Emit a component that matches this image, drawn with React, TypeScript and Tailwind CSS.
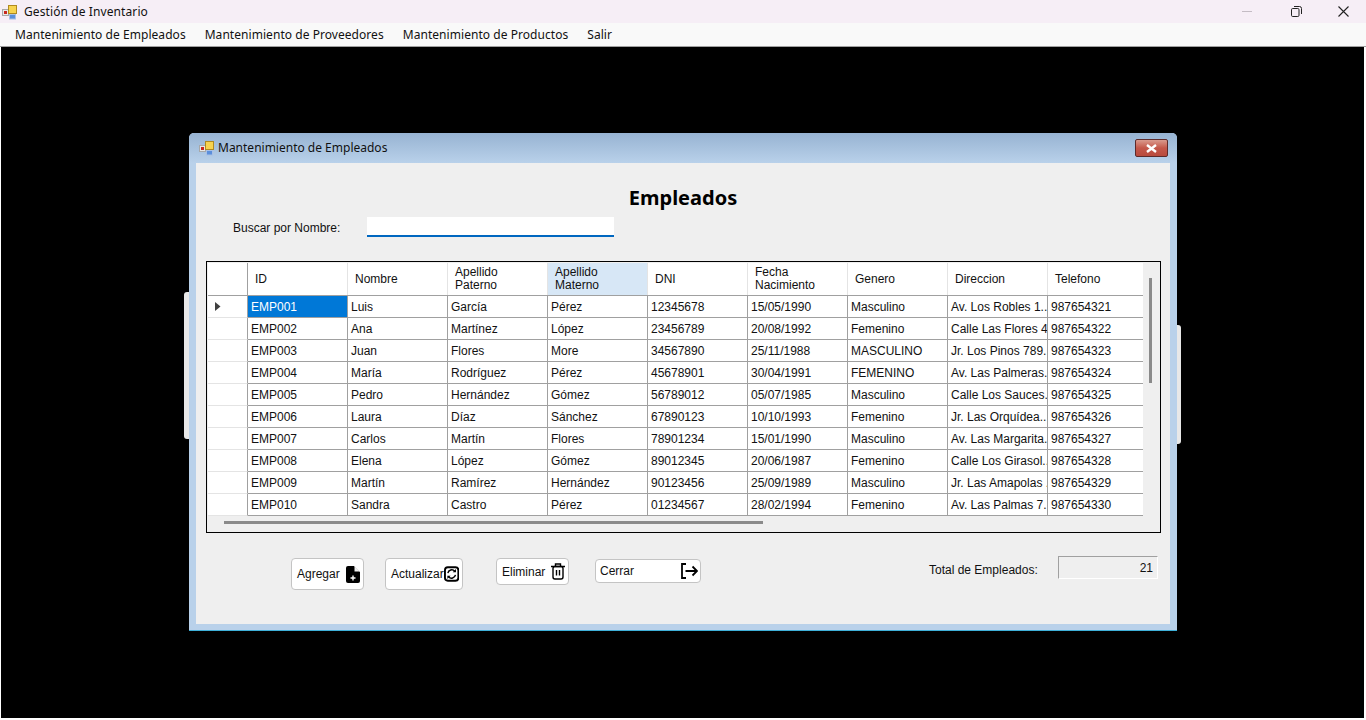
import React from "react";

const columnas = ["ID", "Nombre", "Apellido Paterno", "Apellido Materno", "DNI", "Fecha Nacimiento", "Genero", "Direccion", "Telefono"];

const empleados = [
  ["EMP001", "Luis", "García", "Pérez", "12345678", "15/05/1990", "Masculino", "Av. Los Robles 1...", "987654321"],
  ["EMP002", "Ana", "Martínez", "López", "23456789", "20/08/1992", "Femenino", "Calle Las Flores 4...", "987654322"],
  ["EMP003", "Juan", "Flores", "More", "34567890", "25/11/1988", "MASCULINO", "Jr. Los Pinos 789...", "987654323"],
  ["EMP004", "María", "Rodríguez", "Pérez", "45678901", "30/04/1991", "FEMENINO", "Av. Las Palmeras...", "987654324"],
  ["EMP005", "Pedro", "Hernández", "Gómez", "56789012", "05/07/1985", "Masculino", "Calle Los Sauces...", "987654325"],
  ["EMP006", "Laura", "Díaz", "Sánchez", "67890123", "10/10/1993", "Femenino", "Jr. Las Orquídea...", "987654326"],
  ["EMP007", "Carlos", "Martín", "Flores", "78901234", "15/01/1990", "Masculino", "Av. Las Margarita...", "987654327"],
  ["EMP008", "Elena", "López", "Gómez", "89012345", "20/06/1987", "Femenino", "Calle Los Girasol...", "987654328"],
  ["EMP009", "Martín", "Ramírez", "Hernández", "90123456", "25/09/1989", "Masculino", "Jr. Las Amapolas ...", "987654329"],
  ["EMP010", "Sandra", "Castro", "Pérez", "01234567", "28/02/1994", "Femenino", "Av. Las Palmas 7...", "987654330"],
];

function AppIcon() {
  return (
    <svg width="16" height="16" viewBox="0 0 16 16" className="shrink-0">
      <rect x="0.5" y="5.5" width="6" height="6" fill="#e8e8e8" stroke="#a8a8a8" />
      <rect x="2" y="7" width="3" height="3" fill="#c8281e" />
      <rect x="6.5" y="1.5" width="8" height="8" fill="#f7d34f" stroke="#b08a20" />
      <rect x="7.5" y="10.5" width="6" height="4.5" fill="#5b8fdc" stroke="#a9c0e4" />
    </svg>
  );
}

function App() {
  return (
    <div className="w-[1366px] h-[720px] overflow-hidden bg-white font-['Liberation_Sans',sans-serif] text-black">
      <div className="h-[23px] bg-[#f6eef6] flex items-center pl-[2px] pr-[17px]">
        <AppIcon />
        <span className="ml-[6px] text-[12px] tracking-[0.1px] font-['Noto_Sans',sans-serif] text-[#111]">Gestión de Inventario</span>
        <div className="ml-auto flex items-center">
          <div className="w-[10px] h-[1px] bg-[#c4bcc4]" />
          <svg width="11" height="11" viewBox="0 0 11 11" className="ml-[39px]" fill="none" stroke="#222">
            <rect x="0.5" y="2.5" width="7.5" height="8" rx="1.2" />
            <path d="M3 .5h5.5a2 2 0 0 1 2 2V8" />
          </svg>
          <svg width="11" height="11" viewBox="0 0 11 11" className="ml-[36px]" fill="none" stroke="#222" strokeWidth="1.1">
            <path d="M.5.5l10 10M10.500.5l-10 10" />
          </svg>
        </div>
      </div>

      <div className="h-[24px] bg-[#f9f9f9] flex items-center pl-[15px] gap-[19px] text-[12px] tracking-[0.05px] font-['Noto_Sans',sans-serif] text-[#111] border-b border-[#a0a0a0]">
        <span>Mantenimiento de Empleados</span>
        <span>Mantenimiento de Proveedores</span>
        <span>Mantenimiento de Productos</span>
        <span>Salir</span>
      </div>

      <div className="relative h-[671px] bg-black ml-[1px] mr-[2px] pl-[188px] pt-[86px]">
        <div className="absolute left-[183px] top-[245px] w-[5px] h-[147px] bg-[#e8e8e8] rounded-l-[3px]" />
        <div className="absolute left-[1176px] top-[278px] w-[4px] h-[119px] bg-[#e8e8e8] rounded-r-[3px]" />

        <div className="relative w-[988px] h-[498px] rounded-t-[5px] bg-[#b9d1ea] flex flex-col px-[7px] pb-[6px] border-b border-[#3fb0d8]">
          <div className="h-[30px] -mx-[7px] px-[10px] rounded-t-[5px] bg-gradient-to-b from-[#97b3d2] to-[#b9d1ea] flex items-center shrink-0">
            <AppIcon />
            <span className="ml-[3px] text-[12px] font-['Noto_Sans',sans-serif] text-[#111]">Mantenimiento de Empleados</span>
            <div className="ml-auto mr-[-1px] w-[33px] h-[18px] rounded-[2px] border border-[#5d2a2a] bg-gradient-to-b from-[#d99a8e] via-[#c4574a] to-[#b84a3d] flex items-center justify-center">
              <svg width="13" height="9" viewBox="0 0 13 9" fill="none" stroke="#fff" strokeWidth="2.4">
                <path d="M2 1l9 7M11 1l-9 7" />
              </svg>
            </div>
          </div>

          <div className="flex-1 bg-[#efefef] flex flex-col">
            <h1 className="h-[24px] mt-[23px] text-center text-[20px] leading-[24px] font-bold font-['Noto_Sans',sans-serif] pl-[-2px]">Empleados</h1>

            <div className="flex items-start mt-[4px] h-[24px] pl-[37px]">
              <span className="w-[134px] text-[12px] leading-[16px] mt-[6px] text-[#111]">Buscar por Nombre:</span>
              <div className="w-[247px] h-[20px] mt-[3px] bg-white border-b-2 border-[#0067c0]" />
            </div>

            <div className="relative mt-[23px] ml-[10px] w-[955px] h-[272px] border border-black bg-[#efefef] pl-[1px] pt-[1px]">
              <div className="w-[935px] h-[253px] overflow-hidden bg-white text-[12px] leading-[16px] text-[#111]">
                <div className="flex h-[33px] border-b border-[#a0a0a0]">
                  <div className="w-[40px] shrink-0 border-r border-[#a0a0a0]" />
                  {columnas.map((col, i) => (
                    <div
                      key={col}
                      className={`w-[100px] shrink-0 flex items-center pl-[7px] pr-[30px] leading-[13px] border-r border-[#e4e4e4] ${i === 3 ? "bg-[#d7e7f6]" : ""}`}
                    >
                      {col}
                    </div>
                  ))}
                </div>
                {empleados.map((fila, r) => (
                  <div key={fila[0]} className="flex h-[22px] border-b border-[#a0a0a0]">
                    <div className="w-[40px] shrink-0 border-r border-[#a0a0a0] flex items-center pl-[7px] -mb-px border-b border-b-[#e4e4e4]">
                      {r === 0 && (
                        <svg width="6" height="9" viewBox="0 0 6 9">
                          <path d="M0 0l5.500 4.500L0 9z" fill="#404040" />
                        </svg>
                      )}
                    </div>
                    {fila.map((valor, c) => (
                      <div
                        key={c}
                        className={`w-[100px] shrink-0 flex items-center pl-[3px] whitespace-nowrap overflow-hidden border-r border-[#a0a0a0] ${r === 0 && c === 0 ? "bg-[#0078d7] text-white" : ""}`}
                      >
                        {valor}
                      </div>
                    ))}
                  </div>
                ))}
              </div>
              <div className="absolute right-[8px] top-[16px] w-[3px] h-[105px] bg-[#8a8a8a]" />
              <div className="absolute left-[17px] bottom-[8px] w-[539px] h-[3px] bg-[#8a8a8a]" />
            </div>

            <div className="flex items-start pl-[95px] mt-[25px] text-[12px] leading-[16px] text-[#111]">
              <button className="w-[73px] h-[32px] bg-white rounded-[4px] border border-[#c4c4c4] flex items-center justify-between pl-[5px] pr-[3px]">
                <span>Agregar</span>
                <svg width="14" height="17" viewBox="0 0 14 17">
                  <path d="M2 0h6l6 6v9a2 2 0 0 1-2 2H2a2 2 0 0 1-2-2V2a2 2 0 0 1 2-2z" fill="#000" />
                  <path d="M8.500 0v5.500H14z" fill="#efefef" />
                  <path d="M7 9.500v5M4.500 12h5" stroke="#fff" strokeWidth="1.4" />
                </svg>
              </button>
              <button className="ml-[21px] w-[78px] h-[32px] bg-white rounded-[4px] border border-[#c4c4c4] flex items-center justify-between pl-[5px] pr-[3px]">
                <span>Actualizar</span>
                <svg width="16" height="16" viewBox="0 0 16 16" fill="none">
                  <rect x="1" y="1" width="14" height="14" rx="3" stroke="#000" strokeWidth="2" />
                  <path d="M4 7a4.200 4.200 0 0 1 7.200-2M12 9a4.200 4.200 0 0 1-7.200 2" stroke="#000" strokeWidth="1.5" />
                  <path d="M12.500 2.800v3.400H9.100zM3.500 13.200V9.800h3.400z" fill="#000" />
                </svg>
              </button>
              <button className="ml-[33px] w-[73px] h-[27px] bg-white rounded-[4px] border border-[#c4c4c4] flex items-center justify-between pl-[5px] pr-[3px]">
                <span>Eliminar</span>
                <svg width="14" height="17" viewBox="0 0 14 17" fill="none" stroke="#000" strokeWidth="1.4">
                  <path d="M0 3.500h14M4.500 3.500V1h5v2.500" />
                  <rect x="2" y="3.500" width="10" height="12.500" rx="2" />
                  <path d="M5.500 7v5.500M8.500 7v5.500" />
                </svg>
              </button>
              <button className="ml-[26px] mt-[1px] w-[106px] h-[24px] bg-white rounded-[4px] border border-[#c4c4c4] flex items-center justify-between pl-[4px] pr-[2px]">
                <span>Cerrar</span>
                <svg width="17" height="16" viewBox="0 0 17 16" fill="none" stroke="#000" strokeWidth="1.8">
                  <path d="M5 1H1v14h4M4.500 8H16M11.500 3.500L16 8l-4.500 4.500" />
                </svg>
              </button>
              <span className="ml-[228px] mt-[4px] w-[129px]">Total de Empleados:</span>
              <div className="w-[100px] h-[23px] -mt-[2px] border-t border-l border-[#a0a0a0] border-b border-r border-b-white border-r-white text-right pr-[4px] leading-[22px]">
                21
              </div>
            </div>
          </div>
        </div>
      </div>
    </div>
  );
}

export default App;
